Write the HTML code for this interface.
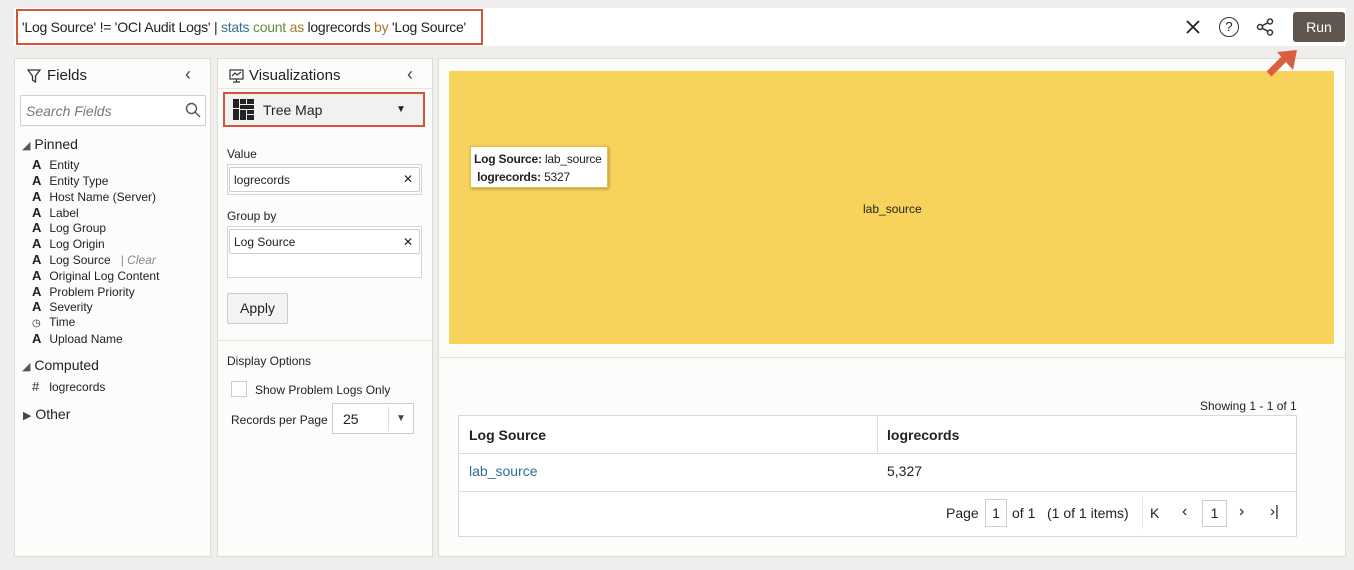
<!DOCTYPE html>
<html><head><meta charset="utf-8"><style>
*{box-sizing:border-box;margin:0;padding:0}
body{width:1354px;height:570px;background:#efeeec;font-family:"Liberation Sans",Arial,sans-serif;color:#222;position:relative;overflow:hidden}
.a{position:absolute}
.panel{background:#fcfcfb;border:1px solid #dcdbd8}
.fl{font-size:12px;left:32px}
.fl b{display:inline-block;width:14px;font-weight:bold;font-size:13px}
.inp{background:#fff;border:1px solid #cfcfcf;border-radius:2px}
</style></head><body>
<div class="a" style="left:14px;top:8px;width:1332px;height:38px;background:#fff"></div>
<div class="a" style="left:16px;top:9px;width:467px;height:36px;border:2px solid #d2553a;background:#fff;font-size:14px;letter-spacing:-0.25px;line-height:32px;padding-left:4px;white-space:nowrap;overflow:hidden">'Log Source' != 'OCI Audit Logs' | <span style="color:#3a6f8f">stats</span> <span style="color:#6b8a3a">count</span> <span style="color:#a27a2a">as</span> logrecords <span style="color:#a27a2a">by</span> 'Log Source'</div>
<svg class="a" style="left:1186px;top:20px" width="14" height="14" stroke="#222" stroke-width="1.8"><path d="M1 1L13 13M13 1L1 13"/></svg>
<div class="a" style="left:1219px;top:17px;width:20px;height:20px;border:1.5px solid #333;border-radius:50%;font-size:13px;text-align:center;line-height:17px">?</div>
<svg class="a" style="left:1256px;top:18px" width="18" height="18" viewBox="0 0 18 18" fill="none" stroke="#333" stroke-width="1.5"><circle cx="4" cy="9" r="2.5"/><circle cx="14" cy="3.5" r="2.5"/><circle cx="14" cy="14.5" r="2.5"/><path d="M6.2 7.8L11.8 4.7M6.2 10.2L11.8 13.3"/></svg>
<div class="a" style="left:1293px;top:12px;width:52px;height:30px;background:#5f5650;border-radius:3px;color:#fff;font-size:14px;text-align:center;line-height:30px">Run</div>

<div class="a panel" style="left:14px;top:58px;width:197px;height:499px"></div>
<svg class="a" style="left:27px;top:69px" width="14" height="14" fill="none" stroke="#333" stroke-width="1.3"><path d="M1 1H13L8.5 7V13L5.5 11V7Z"/></svg>
<div class="a" style="left:47px;top:67px;font-size:15px">Fields</div>
<div class="a" style="left:185px;top:64px;font-size:18px;color:#444">‹</div>
<div class="a inp" style="left:20px;top:95px;width:186px;height:31px;font-size:14px;font-style:italic;color:#777;padding:7px 5px">Search Fields</div>
<svg class="a" style="left:185px;top:102px" width="16" height="16" fill="none" stroke="#555" stroke-width="1.4"><circle cx="6.5" cy="6.5" r="5"/><path d="M10 10L15 15"/></svg>
<div class="a" style="left:22px;top:136px;font-size:14px"><span style="font-size:11px;color:#555">◢</span> Pinned</div>
<div class="a fl" style="top:157px"><b>A</b> Entity</div>
<div class="a fl" style="top:173px"><b>A</b> Entity Type</div>
<div class="a fl" style="top:189px"><b>A</b> Host Name (Server)</div>
<div class="a fl" style="top:205px"><b>A</b> Label</div>
<div class="a fl" style="top:220px"><b>A</b> Log Group</div>
<div class="a fl" style="top:236px"><b>A</b> Log Origin</div>
<div class="a fl" style="top:252px"><b>A</b> Log Source &nbsp;&nbsp;<span style="color:#888">| <i>Clear</i></span></div>
<div class="a fl" style="top:268px"><b>A</b> Original Log Content</div>
<div class="a fl" style="top:284px"><b>A</b> Problem Priority</div>
<div class="a fl" style="top:299px"><b>A</b> Severity</div>
<div class="a fl" style="top:315px"><b style="font-size:10px;font-weight:normal">◷</b> Time</div>
<div class="a fl" style="top:331px"><b>A</b> Upload Name</div>
<div class="a" style="left:22px;top:357px;font-size:14px"><span style="font-size:11px;color:#555">◢</span> Computed</div>
<div class="a fl" style="top:379px"><b style="font-weight:normal">#</b> logrecords</div>
<div class="a" style="left:23px;top:406px;font-size:14px"><span style="font-size:11px;color:#444">▶</span> Other</div>

<div class="a panel" style="left:217px;top:58px;width:216px;height:499px"></div>
<div class="a" style="left:217px;top:88px;width:216px;height:1px;background:#e4e3e0"></div>
<div class="a" style="left:217px;top:340px;width:216px;height:1px;background:#e4e3e0"></div>
<svg class="a" style="left:229px;top:69px" width="15" height="14" fill="none" stroke="#333" stroke-width="1.2"><rect x="1" y="1" width="13" height="9"/><path d="M7.5 10V13M4 13H11M3 7L6 4L8 6L12 3"/></svg>
<div class="a" style="left:249px;top:67px;font-size:15px">Visualizations</div>
<div class="a" style="left:407px;top:64px;font-size:18px;color:#444">‹</div>
<div class="a" style="left:223px;top:92px;width:202px;height:35px;border:2px solid #d2553a;background:#f1f1f0"></div>
<svg class="a" style="left:233px;top:99px" width="21" height="21" fill="#222"><rect x="0" y="0" width="6" height="9"/><rect x="7" y="0" width="6" height="5"/><rect x="14" y="0" width="7" height="5"/><rect x="7" y="6" width="14" height="4"/><rect x="0" y="10" width="6" height="11"/><rect x="7" y="11" width="6" height="10"/><rect x="14" y="11" width="7" height="4"/><rect x="14" y="16" width="7" height="5"/></svg>
<div class="a" style="left:263px;top:102px;font-size:14px">Tree Map</div>
<div class="a" style="left:396px;top:104px;font-size:10px">▼</div>
<div class="a" style="left:227px;top:147px;font-size:12px">Value</div>
<div class="a" style="left:227px;top:164px;width:195px;height:31px;border:1px solid #d5d5d5"></div>
<div class="a inp" style="left:229px;top:167px;width:191px;height:25px;font-size:12px;padding:5px 4px">logrecords</div>
<div class="a" style="left:403px;top:172px;font-size:12px">✕</div>
<div class="a" style="left:227px;top:209px;font-size:12px">Group by</div>
<div class="a" style="left:227px;top:226px;width:195px;height:52px;border:1px solid #d5d5d5;background:#fff"></div>
<div class="a inp" style="left:229px;top:229px;width:191px;height:25px;font-size:12px;padding:5px 4px">Log Source</div>
<div class="a" style="left:403px;top:235px;font-size:12px">✕</div>
<div class="a" style="left:227px;top:293px;width:61px;height:31px;border:1px solid #ccc;border-radius:2px;background:#f3f3f2;font-size:14px;text-align:center;line-height:29px">Apply</div>
<div class="a" style="left:227px;top:354px;font-size:12px">Display Options</div>
<div class="a" style="left:231px;top:381px;width:16px;height:16px;border:1px solid #ccc;background:#fff"></div>
<div class="a" style="left:255px;top:383px;font-size:12px">Show Problem Logs Only</div>
<div class="a" style="left:231px;top:413px;font-size:12px">Records per Page</div>
<div class="a" style="left:332px;top:403px;width:82px;height:31px;border:1px solid #ccc;background:#fff;font-size:14px;padding:7px 10px">25</div>
<div class="a" style="left:388px;top:407px;width:1px;height:24px;background:#ddd"></div>
<div class="a" style="left:396px;top:413px;font-size:10px;color:#444">▼</div>

<div class="a panel" style="left:438px;top:58px;width:908px;height:499px"></div>
<div class="a" style="left:449px;top:71px;width:885px;height:273px;background:#f7d35b"></div>
<div class="a" style="left:439px;top:357px;width:906px;height:1px;background:#e4e3e0"></div>
<div class="a" style="left:470px;top:146px;width:138px;height:42px;background:#fff;border:1px solid #e0c050;box-shadow:1px 1px 3px rgba(0,0,0,.3);font-size:12px;padding:3px 3px;line-height:18px;white-space:nowrap;letter-spacing:-0.2px"><b>Log Source:</b> lab_source<br>&nbsp;<b>logrecords:</b> 5327</div>
<div class="a" style="left:863px;top:202px;font-size:12px">lab_source</div>
<svg class="a" style="left:1265px;top:46px" width="36" height="32"><path d="M4 28L20 12" stroke="#d9603f" stroke-width="7"/><path d="M12 6L32 4L28 24Z" fill="#d9603f"/></svg>
<div class="a" style="left:1200px;top:399px;font-size:12px">Showing 1 - 1 of 1</div>
<div class="a" style="left:458px;top:415px;width:839px;height:122px;border:1px solid #d8d8d8;background:#fff"></div>
<div class="a" style="left:459px;top:453px;width:837px;height:1px;background:#ddd"></div>
<div class="a" style="left:459px;top:491px;width:837px;height:1px;background:#ddd"></div>
<div class="a" style="left:877px;top:416px;width:1px;height:37px;background:#ddd"></div>
<div class="a" style="left:469px;top:427px;font-size:14px;font-weight:bold">Log Source</div>
<div class="a" style="left:887px;top:427px;font-size:14px;font-weight:bold">logrecords</div>
<div class="a" style="left:469px;top:463px;font-size:14px;color:#2f6e96">lab_source</div>
<div class="a" style="left:887px;top:463px;font-size:14px">5,327</div>
<div class="a" style="left:946px;top:505px;font-size:14px">Page</div>
<div class="a" style="left:985px;top:499px;width:22px;height:28px;border:1px solid #ccc;font-size:14px;text-align:center;line-height:26px">1</div>
<div class="a" style="left:1012px;top:505px;font-size:14px">of 1 &nbsp;&nbsp;(1 of 1 items)</div>
<div class="a" style="left:1142px;top:497px;width:1px;height:32px;background:#e4e4e4"></div>
<div class="a" style="left:1150px;top:505px;font-size:14px">K</div>
<div class="a" style="left:1182px;top:503px;font-size:16px">‹</div>
<div class="a" style="left:1202px;top:500px;width:25px;height:27px;border:1px solid #ccc;font-size:14px;text-align:center;line-height:25px">1</div>
<div class="a" style="left:1239px;top:503px;font-size:16px">›</div>
<div class="a" style="left:1270px;top:503px;font-size:15px">›|</div>
</body></html>
